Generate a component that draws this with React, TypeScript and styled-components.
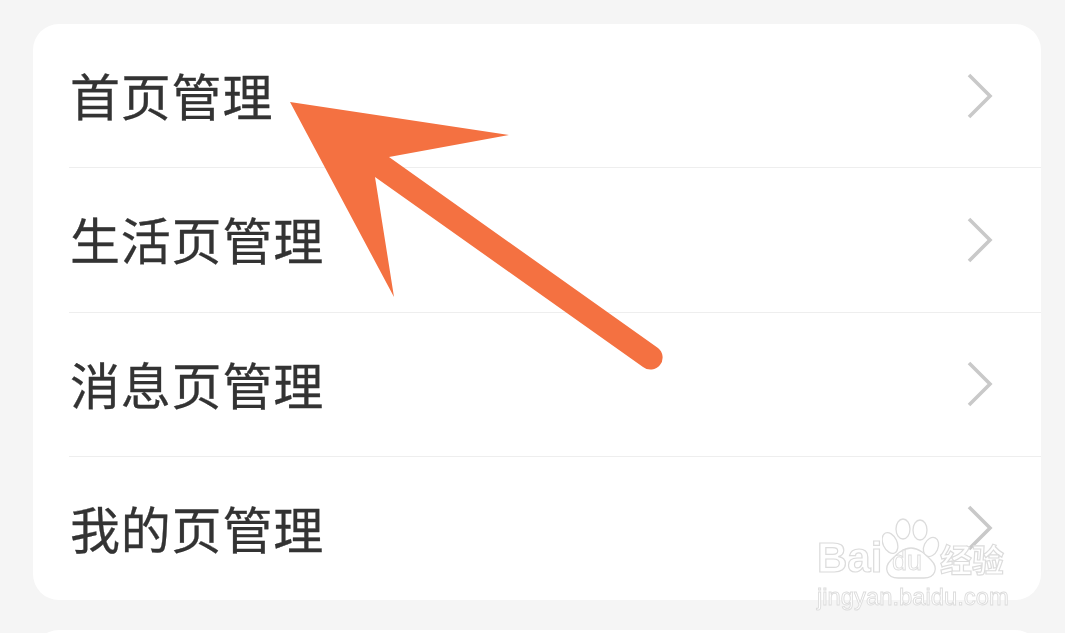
import React from "react";
import styled, { createGlobalStyle } from "styled-components";

const GlobalStyle = createGlobalStyle`
  html, body {
    margin: 0;
    padding: 0;
    background: #f5f5f5;
  }
`;

const Page = styled.div`
  position: relative;
  width: 1065px;
  height: 633px;
  overflow: hidden;
  padding: 24px 24px 0 33px;
  box-sizing: border-box;
  background: #f5f5f5;
  font-family: "Noto Sans CJK SC", "Noto Sans", sans-serif;
`;

const Card = styled.div`
  display: flex;
  flex-direction: column;
  height: 576px;
  padding-left: 36px;
  background: #ffffff;
  border-radius: 26px;
`;

const NextCard = styled.div`
  height: 60px;
  margin-top: 30px;
  background: #ffffff;
  border-radius: 26px;
`;

const Row = styled.div`
  display: flex;
  flex: 1;
  align-items: center;
  justify-content: space-between;
  padding-right: 47px;
  border-bottom: 1.5px solid #eeeeee;
  box-sizing: border-box;

  &:last-child {
    border-bottom: none;
  }
`;

const Label = styled.span`
  font-size: 50px;
  line-height: 60px;
  margin: -3px 0 0 1px;
  color: #333333;
  letter-spacing: 0.8px;
  -webkit-text-stroke: 0.3px #333333;
  filter: blur(0.4px);
`;

const Chevron = styled.svg`
  width: 28px;
  height: 48px;
  filter: blur(0.6px);
`;

const Overlay = styled.svg`
  position: absolute;
  top: 0;
  left: 0;
  width: 1065px;
  height: 633px;
`;

const Watermark = styled.div`
  position: absolute;
  top: 518px;
  left: 817px;
  width: 195px;
  display: flex;
  flex-direction: column;
  font-family: "Liberation Sans", "Noto Sans CJK SC", sans-serif;
  color: #ffffff;
  -webkit-text-stroke: 1.2px #dcdcdc;
  filter: blur(0.4px);
`;

const Brand = styled.div`
  display: flex;
  align-items: flex-end;
  height: 62px;
`;

const BrandLatin = styled.span`
  font-size: 42px;
  line-height: 44px;
  font-weight: 700;
  width: 65px;
`;

const Paw = styled.div`
  position: relative;
  width: 58px;
  height: 62px;
`;

const PawText = styled.span`
  position: absolute;
  left: 10px;
  bottom: 5px;
  font-size: 27px;
  line-height: 27px;
  -webkit-text-stroke: 0.9px #dcdcdc;
`;

const BrandCjk = styled.span`
  font-family: "Noto Sans CJK SC", sans-serif;
  font-size: 32px;
  line-height: 44px;
  font-weight: 700;
`;

const Domain = styled.span`
  font-size: 23.8px;
  line-height: 28px;
  margin-top: 3px;
  -webkit-text-stroke: 0.9px #dcdcdc;
`;

const items = ["首页管理", "生活页管理", "消息页管理", "我的页管理"];

export default function App() {
  return (
    <>
      <GlobalStyle />
      <Page>
        <Card>
          {items.map((item) => (
            <Row key={item}>
              <Label>{item}</Label>
              <Chevron viewBox="0 0 28 48">
                <path
                  d="M3 3 L24 24 L3 45"
                  fill="none"
                  stroke="#c9c9c9"
                  strokeWidth="3.6"
                />
              </Chevron>
            </Row>
          ))}
        </Card>
        <NextCard />
        <Overlay viewBox="0 0 1065 633">
          <path
            d="M290 102 L509 135 L389 157 L658 348 A12 12 0 0 1 643 367 L375 177 L394 297 Z"
            fill="#f47141"
          />
        </Overlay>
        <Watermark>
          <Brand>
            <BrandLatin>Bai</BrandLatin>
            <Paw>
              <svg width="58" height="62" viewBox="0 0 58 62">
                <g fill="#ffffff" stroke="#dcdcdc" strokeWidth="1.3">
                  <ellipse cx="8" cy="25" rx="7" ry="11" transform="rotate(-25 8 25)" />
                  <ellipse cx="21" cy="11" rx="7" ry="10" />
                  <ellipse cx="38" cy="12" rx="7" ry="10" />
                  <ellipse cx="49" cy="29" rx="7" ry="10" transform="rotate(25 49 29)" />
                  <path d="M29 30 C37 30 43 36 49 42 C57 50 53 60 42 60 L16 60 C5 60 1 50 9 42 C15 36 21 30 29 30 Z" />
                </g>
              </svg>
              <PawText>du</PawText>
            </Paw>
            <BrandCjk>经验</BrandCjk>
          </Brand>
          <Domain>jingyan.baidu.com</Domain>
        </Watermark>
      </Page>
    </>
  );
}
